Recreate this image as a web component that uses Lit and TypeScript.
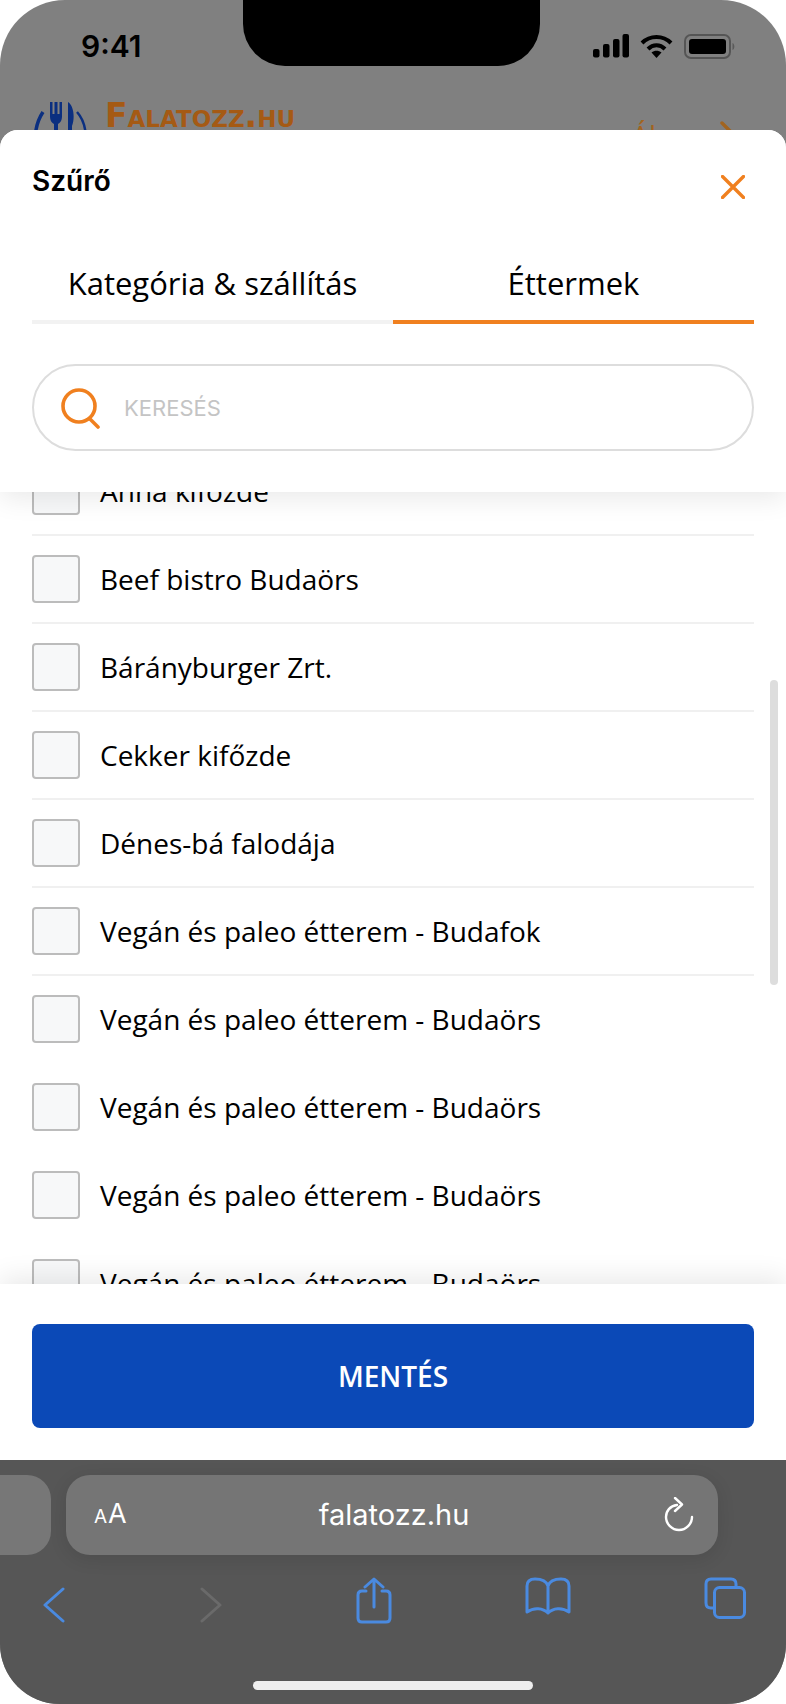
import { LitElement, html, css, svg } from "lit";
import { customElement } from "lit/decorators.js";

const ROWS = [
  ["Anna kifőzde", true],
  ["Beef bistro Budaörs", true],
  ["Bárányburger Zrt.", true],
  ["Cekker kifőzde", true],
  ["Dénes-bá falodája", true],
  ["Vegán és paleo étterem - Budafok", true],
  ["Vegán és paleo étterem - Budaörs", false],
  ["Vegán és paleo étterem - Budaörs", false],
  ["Vegán és paleo étterem - Budaörs", false],
  ["Vegán és paleo étterem - Budaörs", false],
  ["Vegán és paleo étterem - Budaörs", false],
] as const;

@customElement("app-root")
export class AppRoot extends LitElement {
  static styles = css`
    :host { display: block; width: 786px; height: 1704px; background: #fff; }
    .phone { position: relative; width: 786px; height: 1704px; display: flex; flex-direction: column; overflow: hidden;
      border-radius: 65px 65px 60px 60px; background: #808080; font-family: "Open Sans", sans-serif; color: #000; }
    .notch { position: absolute; left: 243px; top: 0; width: 297px; height: 66px; background: #000;
      border-radius: 0 0 42px 42px; }
    .top { flex: none; height: 130px; overflow: hidden; box-sizing: border-box; padding-top: 28px; }
    .status { display: flex; justify-content: space-between; align-items: center; height: 36px; padding: 0 50px 0 81px; }
    .time { font: 600 30px/36px Inter, sans-serif; color: #000; }
    .status-icons { display: flex; align-items: center; gap: 11px; }
    .site { display: flex; align-items: flex-start; margin-top: 36px; padding: 0 50px 0 33px; justify-content: space-between; }
    .brand { display: flex; gap: 14px; align-items: flex-start; }
    .brand-name { font: 700 33px/40px "DejaVu Sans", sans-serif; font-variant: small-caps; color: #a55a14; letter-spacing: 0px; margin-top: -4px; }
    .user { display: flex; gap: 26px; align-items: center; color: #a2641f; font-size: 28px; line-height: 38px; margin-top: 16px; }
    .sheet { flex: 1; min-height: 0; display: flex; flex-direction: column; background: #fff; border-radius: 18px 18px 0 0; overflow: hidden; }
    .head { position: relative; z-index: 2; flex: none; height: 362px; box-sizing: border-box; background: #fff; padding: 0 32px;
      box-shadow: 0 6px 26px rgba(0,0,0,.09); }
    .title-row { display: flex; justify-content: space-between; height: 90px; padding-top: 33px; box-sizing: border-box; }
    .title { font: 600 28px/36px Inter, sans-serif; }
    .close { margin: 12px 9px 0 0; }
    .tabs { display: grid; grid-template-columns: 1fr 1fr; }
    .tab { height: 104px; box-sizing: border-box; padding-top: 41px; text-align: center; font-size: 31px; line-height: 44px; border-bottom: 4px solid #f2f2f2; }
    .tab.on { border-bottom-color: #f0801f; }
    .search { display: flex; align-items: center; gap: 22px; height: 87px; box-sizing: border-box; margin-top: 40px; padding: 0 0 0 26px;
      border: 2px solid #dddddd; border-radius: 44px; }
    .search span { font: 400 22px/30px Inter, sans-serif; color: #c4c4c4; }
    .list { position: relative; flex: 1; min-height: 0; overflow: hidden; }
    .rows { margin: -44px 0 0; padding: 0 32px; }
    .row { display: flex; align-items: center; gap: 20px; height: 88px; box-sizing: border-box; border-bottom: 2px solid transparent; font-size: 28px; line-height: 38px; }
    .row.line { border-bottom-color: #f0f0f0; }
    .box { width: 48px; height: 48px; box-sizing: border-box; border: 2px solid #bcbcbc; border-radius: 4px; background: #f7f8f9; }
    .bar { position: absolute; right: 8px; top: 188px; width: 8px; height: 305px; border-radius: 4px; background: #dddddd; }
    .foot { position: relative; z-index: 2; flex: none; height: 176px; box-sizing: border-box; padding: 40px 32px 0; background: #fff;
      box-shadow: 0 -6px 26px rgba(0,0,0,.09); }
    .save { height: 104px; display: flex; align-items: center; justify-content: center; background: #0b49b7; border-radius: 8px;
      color: #fff; font-size: 28px; font-weight: 600; }
    .chrome { position: relative; flex: none; height: 244px; background: #565656; }
    .urls { display: flex; gap: 15px; padding-top: 15px; margin-left: -60px; }
    .tabstub { width: 111px; height: 80px; border-radius: 0 24px 24px 0; background: #777; }
    .url { display: grid; grid-template-columns: 1fr auto 1fr; align-items: center; width: 652px; height: 80px; box-sizing: border-box; padding: 0 24px 0 28px; border-radius: 24px;
      background: #757575; color: #fff; box-shadow: 0 4px 18px rgba(0,0,0,.1); }
    .aa { font: 400 27px/34px Inter, sans-serif; }
    .aa small { font-size: 19px; margin-right: 1px; }
    .host { font: 400 29px/36px Inter, sans-serif; }
    .reload { justify-self: end; }
    .tools { display: flex; justify-content: space-between; align-items: flex-start; padding: 22px 40px 0 42px; }
    .tools svg { display: block; }
    .home { position: absolute; left: 253px; bottom: 14px; width: 280px; height: 9px; border-radius: 5px; background: #eeeeee; }
  `;

  render() {
    return html`<div class="phone">
      <div class="top">
        <div class="status">
          <span class="time">9:41</span>
          <div class="status-icons">
            <svg width="36" height="24" viewBox="0 0 36 24" fill="#000">
              <rect x="0" y="15" width="6.5" height="8.5" rx="2"/><rect x="10" y="10" width="6.5" height="13.5" rx="2"/>
              <rect x="20" y="5" width="6.5" height="18.5" rx="2"/><rect x="29.5" y="0" width="6.5" height="23.5" rx="2"/>
            </svg>
            <svg width="33" height="24" viewBox="0 0 33 24" fill="none" stroke="#000" stroke-width="4">
              <path d="M2 9 C10 1 23 1 31 9"/><path d="M8 15 C13 10 20 10 25 15"/>
              <path d="M16.5 24 L11.5 18.5 C14.5 16.3 18.5 16.3 21.5 18.5 Z" fill="#000" stroke="none"/>
            </svg>
            <svg width="52" height="25" viewBox="0 0 52 25">
              <rect x="1" y="1" width="45" height="23" rx="6" fill="none" stroke="#555" stroke-width="2"/>
              <rect x="5" y="5" width="37" height="15" rx="3" fill="#000"/>
              <path d="M48.5 9 C51 10 51 15 48.5 16 Z" fill="#5a5a5a"/>
            </svg>
          </div>
        </div>
        <div class="site">
          <div class="brand">
            <svg width="58" height="60" viewBox="0 0 58 60" fill="none" stroke="#0b2f80">
              <path d="M10 12 C2 24 1 36 3 50" stroke-width="3.5"/>
              <path d="M44 12 C53 22 54 36 52 50" stroke-width="2.5"/>
              <path d="M17 2 V16 C17 21 19 23 21 24 V40 H25 V24 C27 23 29 21 29 16 V2 H26.5 V14 H24.5 V2 H21.5 V14 H19.5 V2 Z" fill="#0b2f80" stroke="none"/>
              <path d="M35 2 C41 6 42 18 39 26 V40 H35 Z" fill="#0b2f80" stroke="none"/>
            </svg>
            <span class="brand-name">Falatozz.hu</span>
          </div>
          <div class="user">
            <span>Ákos</span>
            <svg width="16" height="28" viewBox="0 0 16 28" fill="none" stroke="#a2641f" stroke-width="3.5" stroke-linecap="round"><path d="M2 2 L14 14 L2 26"/></svg>
          </div>
        </div>
      </div>
      <div class="sheet">
        <div class="head">
          <div class="title-row">
            <span class="title">Szűrő</span>
            <svg class="close" width="24" height="24" viewBox="0 0 24 24" fill="none" stroke="#f0801f" stroke-width="3.4" stroke-linecap="round"><path d="M1.5 1.5 L22.5 22.5 M22.5 1.5 L1.5 22.5"/></svg>
          </div>
          <div class="tabs">
            <div class="tab">Kategória &amp; szállítás</div>
            <div class="tab on">Éttermek</div>
          </div>
          <div class="search">
            <svg width="42" height="42" viewBox="0 0 42 42" fill="none" stroke="#f0801f" stroke-linecap="round">
              <circle cx="19" cy="19" r="16" stroke-width="3.6"/><path d="M30 32 L38 40" stroke-width="3.6"/>
            </svg>
            <span>KERESÉS</span>
          </div>
        </div>
        <div class="list">
          <div class="rows">
            ${ROWS.map(([name, line]) => html`<div class="row ${line ? "line" : ""}"><div class="box"></div><span>${name}</span></div>`)}
          </div>
          <div class="bar"></div>
        </div>
        <div class="foot"><div class="save">MENTÉS</div></div>
      </div>
      <div class="chrome">
        <div class="urls">
          <div class="tabstub"></div>
          <div class="url">
            <span class="aa"><small>A</small>A</span>
            <span class="host">falatozz.hu</span>
            <svg class="reload" width="30" height="36" viewBox="0 0 30 36" fill="none" stroke="#fff" stroke-width="2.4" stroke-linecap="round" stroke-linejoin="round">
              <path d="M13 8 C6 9 2 14 2 20 C2 27 8 33 15 33 C22 33 28 27 28 20"/><path d="M11 1 L18 7.5 L11 14"/>
            </svg>
          </div>
        </div>
        <div class="tools">
          ${this.icon(24, "#4a8ae0", svg`<path d="M21 2 L3 18 L21 34" stroke-width="3"/>`)}
          ${this.icon(24, "#6a6a6a", svg`<path d="M3 2 L21 18 L3 34" stroke-width="3"/>`)}
          <svg width="36" height="48" viewBox="0 0 36 48" fill="none" stroke="#4a8ae0" stroke-width="3" stroke-linecap="round" stroke-linejoin="round">
            <path d="M10 14 H6 Q2 14 2 18 V41 Q2 45 6 45 H30 Q34 45 34 41 V18 Q34 14 30 14 H26"/><path d="M18 30 V3 M9 10 L18 2 L27 10"/>
          </svg>
          <svg width="46" height="38" viewBox="0 0 46 38" fill="none" stroke="#4a8ae0" stroke-width="3" stroke-linecap="round" stroke-linejoin="round">
            <path d="M23 9 C21 3 15 2 10 2 C5 2 2 4 2 9 V35 C9 30 18 31 23 36 C28 31 37 30 44 35 V9 C44 4 41 2 36 2 C31 2 25 3 23 9 V36"/>
          </svg>
          <svg width="42" height="42" viewBox="0 0 42 42" fill="none" stroke="#4a8ae0" stroke-width="3" stroke-linejoin="round">
            <path d="M9 31 H7 Q2 31 2 26 V7 Q2 2 7 2 H27 Q32 2 32 7 V10"/><rect x="10.500" y="10.500" width="30" height="30" rx="5"/>
          </svg>
        </div>
        <div class="home"></div>
      </div>
      <div class="notch"></div>
    </div>`;
  }

  icon(width: number, color: string, body: unknown) {
    return html`<svg width="${width}" height="36" viewBox="0 0 24 36" fill="none" stroke="${color}" stroke-linecap="round" stroke-linejoin="round" style="margin-top:10px">${body}</svg>`;
  }
}
